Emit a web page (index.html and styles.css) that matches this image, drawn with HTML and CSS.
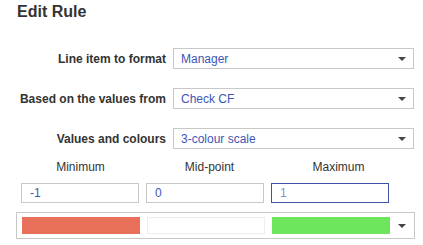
FILE: index.html
```html
<!DOCTYPE html>
<html lang="en">
<head>
  <meta charset="UTF-8">
  <title>Edit Rule</title>
  <link rel="stylesheet" href="styles.css">
</head>
<body>
<div class="dialog">
  <h1 class="title">Edit Rule</h1>

  <div class="form">
    <div class="row">
      <label class="label">Line item to format</label>
      <div class="select">
        <span class="select-value">Manager</span>
        <span class="caret"></span>
      </div>
    </div>
    <div class="row">
      <label class="label">Based on the values from</label>
      <div class="select">
        <span class="select-value">Check CF</span>
        <span class="caret"></span>
      </div>
    </div>
    <div class="row">
      <label class="label">Values and colours</label>
      <div class="select">
        <span class="select-value">3-colour scale</span>
        <span class="caret"></span>
      </div>
    </div>
  </div>

  <div class="scale">
    <div class="scale-heads">
      <div class="head">Minimum</div>
      <div class="head">Mid-point</div>
      <div class="head">Maximum</div>
    </div>
    <div class="scale-inputs">
      <input type="text" class="value-input" value="-1">
      <input type="text" class="value-input" value="0">
      <input type="text" class="value-input active" value="1">
    </div>
    <div class="colour-picker">
      <div class="swatch min"></div>
      <div class="swatch mid"></div>
      <div class="swatch max"></div>
      <span class="caret"></span>
    </div>
  </div>
</div>
</body>
</html>
```

FILE: styles.css
```css
* {
  margin: 0;
  padding: 0;
  box-sizing: border-box;
}

body {
  font-family: "Liberation Sans", Arial, sans-serif;
  font-size: 12px;
  color: #333;
  background: #fff;
}

.dialog {
  width: 423px;
}

/* Heading */
.title {
  font-size: 16px;
  line-height: 18px;
  font-weight: bold;
  color: #333;
  padding: 3px 17px 0;
}

/* Label + dropdown rows */
.form {
  display: flex;
  flex-direction: column;
  gap: 19px;
  margin-top: 27px;
}

.row {
  display: flex;
  align-items: center;
  gap: 7px;
}

.label {
  width: 166px;
  text-align: right;
  font-weight: bold;
  color: #333;
}

.select {
  width: 241px;
  height: 21px;
  border: 1px solid #c8c8c8;
  display: flex;
  align-items: center;
  justify-content: space-between;
  padding: 0 7px 0 7px;
}

.select-value {
  color: #3d56b5;
}

.caret {
  width: 0;
  height: 0;
  border-left: 4px solid transparent;
  border-right: 4px solid transparent;
  border-top: 4px solid #444;
}

/* Colour scale */
.scale {
  margin-top: 11px;
  padding-left: 16px;
}

.scale-heads {
  display: grid;
  grid-template-columns: repeat(3, 129px);
  line-height: 14px;
}

.head {
  text-align: center;
  color: #333;
}

.scale-inputs {
  display: grid;
  grid-template-columns: repeat(3, 118px);
  gap: 7px;
  margin-top: 9px;
  padding-left: 5px;
}

.value-input {
  height: 20px;
  border: 1px solid #c8c8c8;
  font-family: inherit;
  font-size: 12px;
  color: #3d56b5;
  padding: 0 8px;
  outline: none;
}

.value-input.active {
  border-color: #3f51a5;
  color: #8393cf;
}

.colour-picker {
  width: 399px;
  height: 27px;
  margin-top: 9px;
  border: 1px solid #c8c8c8;
  display: flex;
  align-items: center;
  gap: 7px;
  padding-left: 5px;
}

.swatch {
  width: 118px;
  height: 17px;
}

.swatch.min {
  background: #e8705a;
}

.swatch.mid {
  background: #fff;
  border: 1px solid #eee;
}

.swatch.max {
  background: #6de65d;
}

.colour-picker .caret {
  margin-left: 1px;
}
```
